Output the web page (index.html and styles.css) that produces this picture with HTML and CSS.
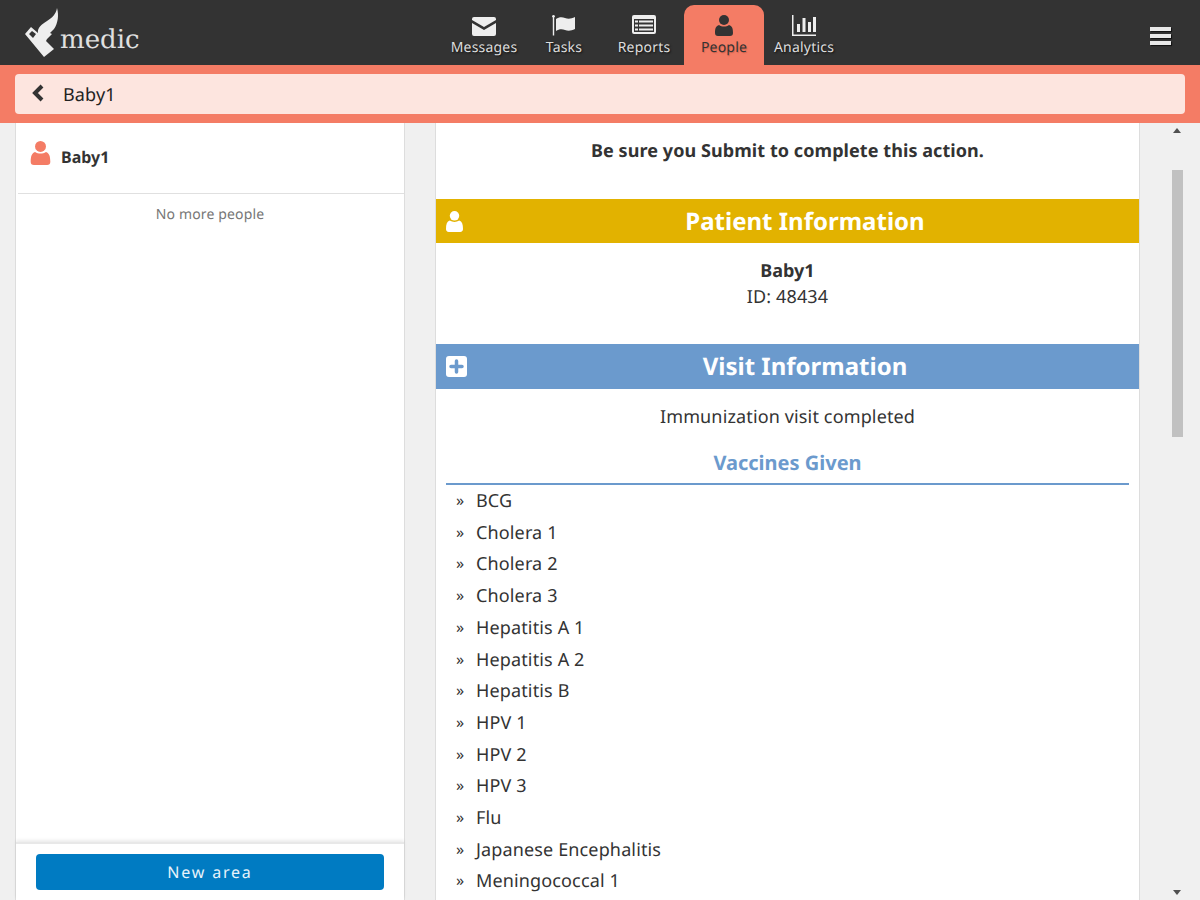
FILE: index.html
```html
<!DOCTYPE html>
<html lang="en">
<head>
    <meta charset="UTF-8">
    <meta name="viewport" content="width=device-width, initial-scale=1.0">
    <title>People - Medic</title>
    <link rel="stylesheet" href="styles.css">
</head>
<body>
    <header class="topbar">
        <div class="logo">
            <svg class="logo-mark" width="36" height="52" viewBox="24 7 36 52">
                <path fill="#eee" fill-rule="evenodd" d="M57 8C59 15 58 23 54 29L50 33 52 34 47 39 46 41 54 49 44 57 25 34 31 27 38 33C37 28 42 24 47 21 52 18 56 14 57 8ZM29 34L33 38 36 34 32 31Z"/>
            </svg>
            <span class="logo-text">medic</span>
        </div>
        <nav class="tabs">
            <a class="tab">
                <svg width="24" height="22" viewBox="0 0 24 22"><path fill="#eee" d="M2 2h20a2 2 0 0 1 2 2v1L12 12 0 5V4a2 2 0 0 1 2-2zM0 8l12 7 12-7v11a2 2 0 0 1-2 2H2a2 2 0 0 1-2-2z"/></svg>
                <span>Messages</span>
            </a>
            <a class="tab">
                <svg width="24" height="22" viewBox="0 0 24 22"><circle fill="#eee" cx="1.500" cy="1.300" r="1.300"/><path fill="#eee" d="M.8 1h1.400v19.500H.8zM4 4c3-2 6-2 9-1s6 1 10-1v12c-4 2-7 2-10 1s-6-1-9 1z"/></svg>
                <span>Tasks</span>
            </a>
            <a class="tab">
                <svg width="24" height="22" viewBox="0 0 24 22"><path fill="#eee" fill-rule="evenodd" d="M2 0h20a2 2 0 0 1 2 2v15a2 2 0 0 1-2 2H2a2 2 0 0 1-2-2V2a2 2 0 0 1 2-2zM2 4v13h20V4zM3 5.500h3v2H3zM7 5.500h14v2H7zM3 9.500h3v2H3zM7 9.500h14v2H7zM3 13.500h3v2H3zM7 13.500h14v2H7z"/></svg>
                <span>Reports</span>
            </a>
            <a class="tab tab-active">
                <svg width="18" height="22" viewBox="0 0 18 22"><circle fill="#333" cx="9" cy="5" r="5"/><path fill="#333" d="M4 10c3 2 7 2 10 0 3 1 4 3 4 8 0 2-1 3-3 3H3c-2 0-3-1-3-3 0-5 1-7 4-8z"/></svg>
                <span>People</span>
            </a>
            <a class="tab">
                <svg width="24" height="22" viewBox="0 0 24 22"><path fill="#eee" d="M0 0h1.500v19.500H24V21H0zM5 9h3v8H5zM10.500 3h3v14h-3zM16 7h3v10h-3zM21 2h3v15h-3z"/></svg>
                <span>Analytics</span>
            </a>
        </nav>
        <button class="menu-btn"><i></i><i></i><i></i></button>
    </header>

    <div class="subbar">
        <div class="subbar-inner">
            <svg class="back" width="14" height="18" viewBox="0 0 14 18"><path fill="none" stroke="#333" stroke-width="4" d="M11 2L4 9l7 7"/></svg>
            <span>Baby1</span>
        </div>
    </div>

    <main class="main">
        <section class="left-panel">
            <div class="person-row">
                <svg width="21" height="24" viewBox="0 0 18 22"><circle fill="#f47c65" cx="9" cy="5" r="5"/><path fill="#f47c65" d="M4 10c3 2 7 2 10 0 3 1 4 4 4 9 0 2-1 3-3 3H3c-2 0-3-1-3-3 0-5 1-8 4-9z"/></svg>
                <strong>Baby1</strong>
            </div>
            <p class="no-more">No more people</p>
            <div class="left-footer">
                <button class="new-btn">New area</button>
            </div>
        </section>

        <section class="content">
            <p class="notice">Be sure you Submit to complete this action.</p>

            <h2 class="band band-yellow">
                <svg class="band-icon" width="17" height="21" viewBox="0 0 18 22"><circle fill="#fff" cx="9" cy="5" r="5"/><path fill="#fff" d="M4 10c3 2 7 2 10 0 3 1 4 4 4 9 0 2-1 3-3 3H3c-2 0-3-1-3-3 0-5 1-8 4-9z"/></svg>
                Patient Information
            </h2>
            <div class="patient">
                <strong>Baby1</strong>
                <div>ID: 48434</div>
            </div>

            <h2 class="band band-blue">
                <svg class="band-icon" width="21" height="21" viewBox="0 0 21 21"><rect fill="#fff" width="21" height="21" rx="3"/><path stroke="#6b9acd" stroke-width="3.500" stroke-linecap="round" d="M10.500 5v11M5 10.500h11"/></svg>
                Visit Information
            </h2>
            <p class="visit">Immunization visit completed</p>
            <h3 class="vaccines">Vaccines Given</h3>
            <ul class="vaccine-list">
                <li>BCG</li>
                <li>Cholera 1</li>
                <li>Cholera 2</li>
                <li>Cholera 3</li>
                <li>Hepatitis A 1</li>
                <li>Hepatitis A 2</li>
                <li>Hepatitis B</li>
                <li>HPV 1</li>
                <li>HPV 2</li>
                <li>HPV 3</li>
                <li>Flu</li>
                <li>Japanese Encephalitis</li>
                <li>Meningococcal 1</li>
            </ul>
        </section>

        <div class="scroll-col">
            <span class="arrow-up"></span>
            <span class="thumb"></span>
            <span class="arrow-down"></span>
        </div>
    </main>
</body>
</html>
```

FILE: styles.css
```css
/* Page */
* {
    box-sizing: border-box;
}

html, body {
    height: 100%;
}

body {
    margin: 0;
    height: 900px;
    overflow: hidden;
    background-color: #f0f0f0;
    color: #333;
    font-family: "Noto Sans", sans-serif;
    text-rendering: geometricPrecision;
    display: flex;
    flex-direction: column;
}

/* Top bar */
.topbar {
    height: 65px;
    flex: none;
    background: #333;
    display: flex;
    padding-left: 24px;
}

.logo {
    width: 420px;
    display: flex;
    align-items: flex-start;
    padding-top: 7px;
}

.logo-text {
    font-family: "DejaVu Serif", serif;
    font-size: 26px;
    line-height: 30px;
    color: #e0e0e0;
    margin: 18px 0 0 0;
}

.tabs {
    display: flex;
    padding-top: 5px;
}

.tab {
    width: 80px;
    height: 60px;
    display: flex;
    flex-direction: column;
    align-items: center;
    justify-content: flex-start;
    padding-top: 10px;
    color: #ddd;
    font-size: 14px;
    letter-spacing: 0.2px;
    line-height: 20px;
    text-shadow: 1px 1px 2px #111;
}

.tab span {
    margin-top: 1px;
}

.tab-active {
    background: #f47c65;
    color: #333;
    border-radius: 10px 10px 0 0;
    text-shadow: 1px 1px 1px #d5634e;
}

.menu-btn {
    margin-left: auto;
    margin-right: 29px;
    margin-top: 27px;
    width: 21px;
    height: 18px;
    padding: 0;
    border: none;
    background: none;
    display: flex;
    flex-direction: column;
    justify-content: space-between;
}

.menu-btn i {
    display: block;
    height: 4px;
    background: #e8e8e8;
    box-shadow: 1px 1px 1px #111;
}

/* Title bar */
.subbar {
    height: 58px;
    flex: none;
    background: #f47c65;
    padding: 9px 15px;
}

.subbar-inner {
    height: 40px;
    background: #fde5df;
    border-radius: 4px;
    display: flex;
    align-items: center;
    padding-left: 16px;
    font-size: 18px;
    letter-spacing: 0.14px;
    color: #222;
}

.subbar-inner span {
    padding-top: 2px;
}

.back {
    margin-right: 18px;
    margin-top: -2px;
}

/* Main columns */
.main {
    flex: 1;
    min-height: 0;
    display: flex;
    padding-left: 15px;
}

.left-panel {
    width: 390px;
    background: #fff;
    border: 1px solid #ddd;
    border-width: 0 1px;
    display: flex;
    flex-direction: column;
}

.person-row {
    height: 71px;
    border-bottom: 1px solid #e0e0e0;
    margin-left: 2px;
    display: flex;
    align-items: flex-start;
    padding: 18px 0 0 12px;
    font-size: 16px;
    line-height: 32px;
}

.person-row svg {
    margin-right: 10px;
}

.no-more {
    margin: 11px 0 0;
    text-align: center;
    font-size: 14px;
    letter-spacing: 0.14px;
    line-height: 20px;
    color: #777;
}

.left-footer {
    margin-top: auto;
    height: 58px;
    padding: 10px 20px 0;
    border-top: 2px solid #e8e8e8;
    box-shadow: 0 -2px 3px rgba(0, 0, 0, 0.08);
}

.new-btn {
    width: 100%;
    height: 36px;
    border: none;
    border-radius: 4px;
    background: #007bc2;
    color: #e8f3fa;
    font-family: inherit;
    font-size: 16px;
    letter-spacing: 1.8px;
    text-rendering: geometricPrecision;
}

/* Form content */
.content {
    width: 705px;
    margin-left: 30px;
    background: #fff;
    border-left: 1px solid #ddd;
    border-right: 1px solid #ddd;
    overflow: hidden;
    font-size: 18px;
    letter-spacing: 0.14px;
}

.notice {
    margin: 16px 0 0;
    height: 60px;
    text-align: center;
    font-weight: bold;
    font-size: 18px;
    letter-spacing: 0.07px;
    line-height: 25px;
}

.band {
    position: relative;
    margin: 0;
    height: 44px;
    padding-left: 35px;
    color: #fff;
    font-size: 24px;
    font-weight: bold;
    letter-spacing: 0;
    line-height: 46px;
    text-align: center;
}

.band-yellow {
    background: #e2b200;
}

.band-blue {
    height: 45px;
    line-height: 45px;
    background: #6b9acd;
}

.band-icon {
    position: absolute;
    left: 10px;
    top: 12px;
}

.patient {
    height: 101px;
    padding-top: 15px;
    text-align: center;
    line-height: 26px;
}

.patient strong {
    letter-spacing: 0;
}

.visit {
    margin: 0;
    padding-top: 15px;
    text-align: center;
    line-height: 26px;
}

.vaccines {
    margin: 19px 10px 0;
    height: 36px;
    border-bottom: 2px solid #6b9acd;
    color: #6b9acd;
    font-size: 20px;
    letter-spacing: 0;
    line-height: 28px;
    text-align: center;
}

.vaccine-list {
    list-style: none;
    margin: 0;
    padding: 1px 0 0 20px;
}

.vaccine-list li {
    line-height: 31.700px;
    padding-left: 20px;
    position: relative;
}

.vaccine-list li::before {
    content: "\00BB";
    position: absolute;
    left: 0;
    top: -1px;
    font-size: 16px;
}

/* Scrollbar column */
.scroll-col {
    position: relative;
    flex: 1;
}

.thumb {
    position: absolute;
    top: 47px;
    left: 32px;
    width: 11px;
    height: 267px;
    background: #c1c1c1;
}

.arrow-up, .arrow-down {
    position: absolute;
    left: 33px;
    width: 0;
    height: 0;
    border-left: 4.500px solid transparent;
    border-right: 4.500px solid transparent;
}

.arrow-up {
    top: 5px;
    border-bottom: 5px solid #505050;
}

.arrow-down {
    bottom: 5px;
    border-top: 5px solid #505050;
}
```
